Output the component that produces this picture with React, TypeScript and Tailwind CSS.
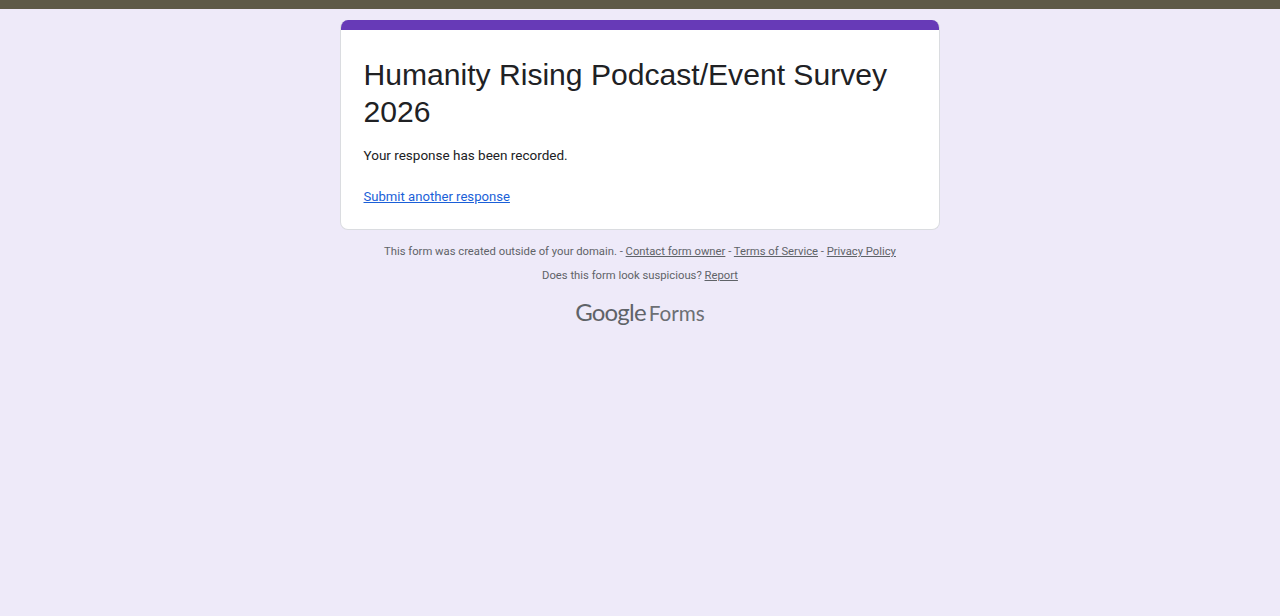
export default function App() {
  return (
    <div className="min-h-screen bg-[#eeeaf9] font-['Roboto',sans-serif]">
      <div className="h-[9px] bg-[#5e5a48]" />

      <main className="mx-auto w-[600px] pt-[11px]">
        {/* CARD */}
        <section className="rounded-lg overflow-hidden bg-white border border-[#dadce0] border-t-0">
          <div className="h-[10px] bg-[#673ab7] -mx-px" />
          <div className="px-[22.5px] pt-[25.5px] pb-[22px]">
            <h1 className="font-['Liberation_Sans',sans-serif] text-[30.1px] leading-[37.5px] text-[#202124]">
              Humanity Rising Podcast/Event Survey 2026
            </h1>
            <p className="mt-[14.5px] text-[13.5px] leading-5 text-[#202124]">
              Your response has been recorded.
            </p>
            <div className="mt-[22px] text-[13.125px] leading-5">
              <a href="#" className="text-[#1a5fd8] underline">
                Submit another response
              </a>
            </div>
          </div>
        </section>

        {/* FOOTER */}
        <div className="mt-[13px] text-center text-[11.25px] leading-[18px] text-[#5f6368]">
          <div>
            This form was created outside of your domain. -{" "}
            <a href="#" className="underline">Contact form owner</a> -{" "}
            <a href="#" className="underline">Terms of Service</a> -{" "}
            <a href="#" className="underline">Privacy Policy</a>
          </div>
          <div className="mt-[6px]">
            Does this form look suspicious? <a href="#" className="underline">Report</a>
          </div>
        </div>

        {/* LOGO */}
        <div className="mt-[11px] flex justify-center items-baseline gap-[3px] text-[#5f6368] font-['Lato',sans-serif]">
          <span className="text-[24px] leading-8 tracking-[-0.8px]">Google</span>
          <span className="text-[20.7px] leading-8 text-[#6c6f74]">Forms</span>
        </div>
      </main>
    </div>
  );
}
